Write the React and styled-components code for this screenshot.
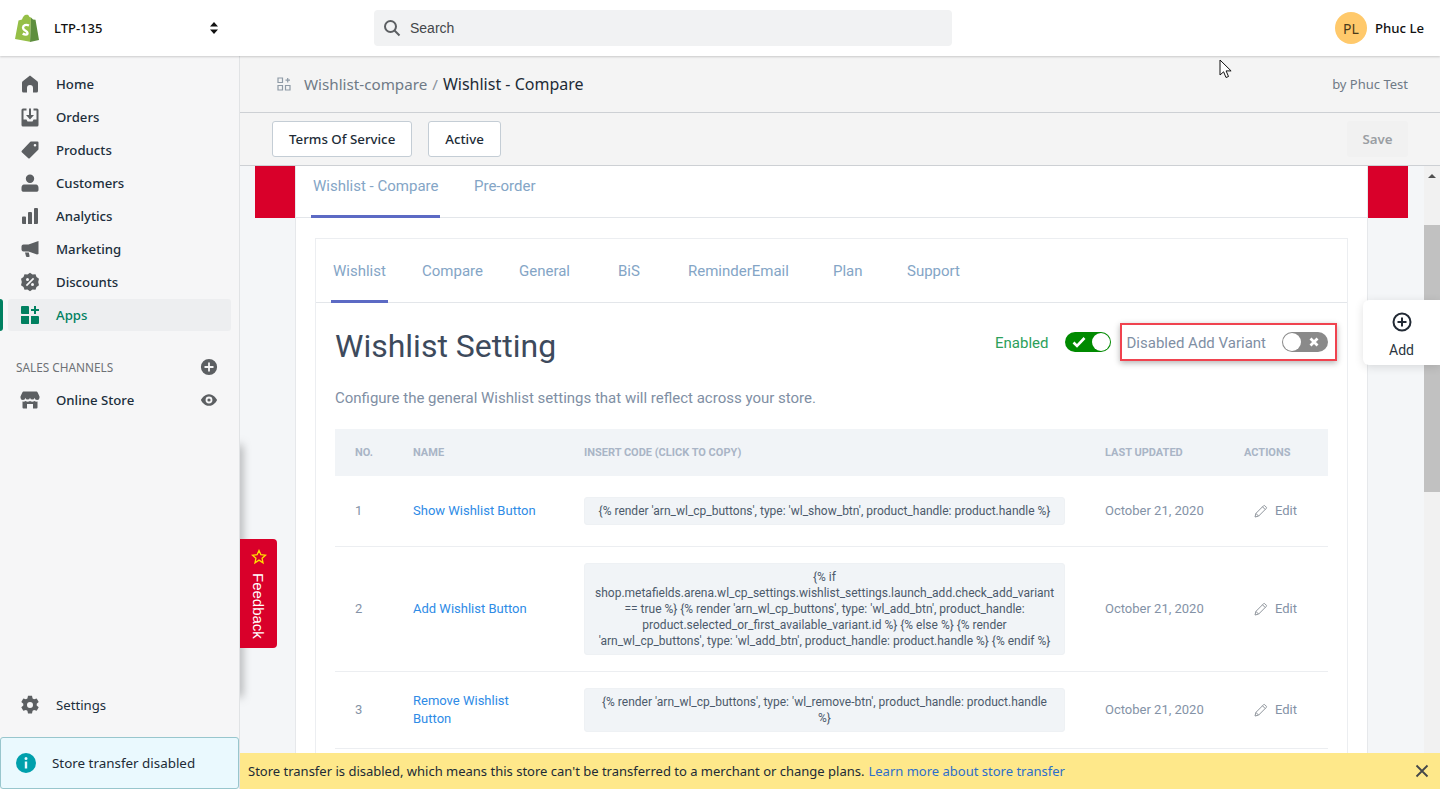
import React from 'react'
import styled, { createGlobalStyle } from 'styled-components'

const GlobalStyle = createGlobalStyle`
    html, body {
        margin: 0;
        height: 100%;
        overflow: hidden;
        background: #f4f6f8;
    }
    * {
        box-sizing: border-box;
    }
`;

const uiFont = `"Noto Sans", "Open Sans", sans-serif`;
const appFont = `Roboto, "Liberation Sans", sans-serif`;

const Page = styled.div`
    width: 1440px;
    height: 789px;
    display: flex;
    flex-direction: column;
    overflow: hidden;
    font-family: ${uiFont};
    color: #212b36;
`;

const TopBar = styled.header`
    position: relative;
    z-index: 3;
    height: 56px;
    flex: none;
    display: flex;
    align-items: center;
    background: #fff;
    box-shadow: 0 1px 2px rgba(0, 0, 0, 0.18);
`;

const StoreSwitch = styled.div`
    width: 374px;
    padding: 0 155px 0 14px;
    display: flex;
    align-items: center;
`;

const StoreName = styled.span`
    flex: 1;
    margin-left: 14px;
    font-size: 13px;
    font-weight: 500;
    color: #111;
`;

const SearchBox = styled.div`
    width: 578px;
    height: 36px;
    display: flex;
    align-items: center;
    gap: 9px;
    padding-left: 9px;
    background: #f1f2f3;
    border-radius: 4px;
    font-family: "Liberation Sans", sans-serif;
    font-size: 14px;
    color: #44474a;
`;

const UserBox = styled.div`
    margin-left: auto;
    padding-right: 16px;
    display: flex;
    align-items: center;
    gap: 8px;
    font-size: 13.2px;
    font-weight: 500;
    color: #111;
`;

const Avatar = styled.div`
    width: 32px;
    height: 32px;
    border-radius: 50%;
    display: flex;
    align-items: center;
    justify-content: center;
    background: #ffc96b;
    font-size: 14px;
    font-weight: 400;
    color: #4a3a1a;
`;

const Body = styled.div`
    flex: 1;
    min-height: 0;
    display: flex;
`;

const Sidebar = styled.nav`
    position: relative;
    z-index: 2;
    width: 240px;
    flex: none;
    display: flex;
    flex-direction: column;
    padding-top: 12px;
    background: #f6f6f7;
    border-right: 1px solid #e1e3e5;
`;

const NavRow = styled.div`
    position: relative;
    height: 32px;
    margin: 0 8px 1px 8px;
    padding-left: 12px;
    display: flex;
    align-items: center;
    gap: 16px;
    border-radius: 3px;
    font-size: 13.2px;
    font-weight: 500;
    color: ${({ $active }) => ($active ? '#008060' : '#202e3c')};
    background: ${({ $active }) => ($active ? '#edeef0' : 'transparent')};
    ${({ $active }) => $active && `
        &::before {
            content: '';
            position: absolute;
            left: -8px;
            top: 0;
            bottom: 0;
            width: 3px;
            background: #008060;
            border-radius: 0 3px 3px 0;
        }
    `}
`;

const SectionHead = styled.div`
    margin: 25px 0 7px;
    padding: 0 21px 0 16px;
    height: 20px;
    display: flex;
    align-items: center;
    justify-content: space-between;
    font-size: 11.8px;
    color: #6d7175;
`;

const RowEnd = styled.span`
    margin-left: auto;
    margin-right: 13px;
    display: flex;
`;

const SettingsRow = styled(NavRow)`
    margin-top: auto;
    margin-bottom: 16px;
    font-weight: 400;
`;

const TransferNote = styled.div`
    height: 52px;
    width: 239px;
    flex: none;
    display: flex;
    align-items: center;
    gap: 16px;
    padding-left: 15px;
    background: #eaf9fe;
    border: 1px solid #98c6cd;
    border-radius: 3px;
    font-size: 13.4px;
    color: #212b36;
`;

const Main = styled.main`
    position: relative;
    flex: 1;
    min-width: 0;
    display: flex;
    flex-direction: column;
`;

const PageHead = styled.div`
    height: 57px;
    flex: none;
    display: flex;
    align-items: center;
    padding: 0 32px 0 37px;
    background: #f4f4f4;
    border-bottom: 1px solid #cdd0d4;
`;

const Crumb = styled.span`
    margin-left: 13px;
    font-size: 15.2px;
    color: #6f7a86;
`;

const Slash = styled.span`
    margin: 0 5px;
    font-size: 15.2px;
    color: #8a929b;
`;

const CrumbNow = styled.span`
    font-size: 16px;
    color: #212b36;
`;

const ByLine = styled.span`
    margin-left: auto;
    font-size: 13px;
    color: #6f7a86;
`;

const Toolbar = styled.div`
    height: 53px;
    flex: none;
    display: flex;
    align-items: center;
    gap: 16px;
    padding: 0 32px;
    background: #f4f4f4;
    border-bottom: 1px solid #cdd0d4;
`;

const Button = styled.button`
    height: 36px;
    padding: 0 16px;
    background: #fff;
    border: 1px solid #c4cdd5;
    border-radius: 3px;
    font-family: ${uiFont};
    font-size: 13.3px;
    font-weight: 500;
    color: #212b36;
`;

const SaveButton = styled(Button)`
    margin-left: auto;
    width: 61px;
    padding: 0;
    background: #f1f1f1;
    border: none;
    font-weight: 600;
    color: #9a9ea3;
`;

const ScrollArea = styled.div`
    flex: 1;
    min-height: 0;
    display: flex;
    overflow: hidden;
`;

const Content = styled.div`
    flex: 1;
    min-width: 0;
    padding: 0 16px 0 15px;
    display: grid;
    grid-template-columns: 40px 1073px 40px;
    align-items: start;
    background: #f4f6f8;
    font-family: ${appFont};
`;

const RedBlock = styled.div`
    height: 52px;
    background: #d9002a;
`;

const Panel = styled.section`
    background: #fff;
    border-left: 1px solid #e6e8eb;
    border-right: 1px solid #e6e8eb;
    padding: 0 19px;
`;

const OuterTabs = styled.div`
    height: 52px;
    margin: 0 -19px;
    padding-left: 15px;
    display: flex;
    border-bottom: 1px solid #e3e6ea;
`;

const TabSlot = styled.div`
    width: ${({ $w }) => $w}px;
    display: flex;
`;

const TabLabel = styled.span`
    height: ${({ $h }) => $h}px;
    padding: ${({ $pt }) => $pt || 0}px 2px ${({ $pb }) => $pb || 0}px;
    display: flex;
    align-items: center;
    font-size: 15px;
    color: #84a5c6;
    border-bottom: 3px solid ${({ $active }) => ($active ? '#5c6ac4' : 'transparent')};
`;

const Card = styled.div`
    margin-top: 20px;
    height: 700px;
    border: 1px solid #eceef1;
    border-bottom: none;
`;

const InnerTabs = styled.div`
    height: 64px;
    padding-left: 15px;
    display: flex;
    border-bottom: 1px solid #e3e6ea;
`;

const CardBody = styled.div`
    padding: 20px 19px 0;
`;

const TitleRow = styled.div`
    display: flex;
    align-items: flex-start;
`;

const Title = styled.h1`
    margin: 0;
    font-size: 32px;
    line-height: 46px;
    font-weight: 400;
    color: #3d4a5c;
`;

const Controls = styled.div`
    margin-left: auto;
    margin-right: -9px;
    height: 38px;
    display: flex;
    align-items: center;
`;

const EnabledLabel = styled.span`
    padding-top: 1px;
    font-size: 15px;
    color: #2ca05a;
    margin-right: 16px;
`;

const Switch = styled.div`
    width: 46px;
    height: 20px;
    padding: 0 1px 0 7px;
    display: flex;
    align-items: center;
    justify-content: space-between;
    flex-direction: ${({ $on }) => ($on ? 'row' : 'row-reverse')};
    border-radius: 10px;
    background: ${({ $on }) => ($on ? '#008a00' : '#8a8a8a')};
    ${({ $on }) => !$on && 'padding: 0 9px 0 1px;'}
`;

const Knob = styled.span`
    width: 18px;
    height: 18px;
    border-radius: 50%;
    background: #fff;
`;

const Outlined = styled.div`
    margin-left: 9px;
    height: 38px;
    padding: 0 7px 0 5px;
    display: flex;
    align-items: center;
    gap: 16px;
    border: 2px solid #f0434f;
    box-shadow: 0 2px 6px rgba(0, 0, 0, 0.3);
    font-size: 15px;
    color: #7f8fa4;
`;

const OutlinedText = styled.span`
    padding-top: 1px;
`;

const Description = styled.p`
    margin: 19px 0 21px;
    font-size: 15px;
    line-height: 20px;
    color: #7f8fa4;
`;

const Table = styled.table`
    width: 993px;
    table-layout: fixed;
    border-collapse: separate;
    border-spacing: 0;
`;

const Th = styled.th`
    width: ${({ $w }) => $w}px;
    height: 47px;
    padding: 0 0 0 ${({ $pl }) => $pl || 0}px;
    background: #f1f4f7;
    text-align: left;
    font-size: 11px;
    font-weight: 700;
    text-transform: uppercase;
    color: #a9b5c6;
`;

const Td = styled.td`
    height: 71px;
    padding: 16px ${({ $pr }) => $pr || 0}px 16px ${({ $pl }) => $pl || 0}px;
    border-bottom: 1px solid #eceef1;
    font-size: 13px;
    line-height: 18px;
    color: #8492a6;
`;

const NameLink = styled.a`
    color: #2e8be6;
`;

const CodeBox = styled.div`
    padding: 5px 10px;
    background: #f1f4f7;
    border: 1px solid #eef1f4;
    border-radius: 3px;
    text-align: center;
    font-size: 12px;
    line-height: 16px;
    color: #4c5a6b;
`;

const EditCell = styled.span`
    display: flex;
    align-items: center;
    gap: 7px;
`;

const Scrollbar = styled.div`
    width: 16px;
    flex: none;
    display: flex;
    flex-direction: column;
    align-items: center;
    background: #f1f1f1;
`;

const ScrollUp = styled.span`
    margin-top: 8px;
    border-left: 4px solid transparent;
    border-right: 4px solid transparent;
    border-bottom: 4px solid #505050;
`;

const ScrollThumb = styled.span`
    margin-top: 47px;
    width: 100%;
    height: 267px;
    background: #c1c1c1;
`;

const Banner = styled.div`
    height: 36px;
    flex: none;
    position: relative;
    z-index: 2;
    display: flex;
    align-items: center;
    padding: 0 10px 0 8px;
    background: #fee88a;
    font-size: 13px;
    color: #212b36;
`;

const BannerLink = styled.a`
    margin-left: 4px;
    color: #2c6ecb;
`;

const BannerClose = styled.span`
    margin-left: auto;
    display: flex;
`;

const FeedbackShadow = styled.div`
    position: absolute;
    left: -2px;
    top: 390px;
    width: 2px;
    height: 250px;
    box-shadow: 0 0 10px 1px rgba(0, 0, 0, 0.55);
`;

const Feedback = styled.div`
    position: absolute;
    z-index: 2;
    left: 0;
    top: 483px;
    width: 37px;
    height: 109px;
    padding-top: 10px;
    display: flex;
    flex-direction: column;
    align-items: center;
    gap: 8px;
    background: #d9002a;
    border-radius: 0 4px 4px 0;
    font-family: "Liberation Sans", sans-serif;
    font-size: 15px;
    color: #fff;
`;

const FeedbackText = styled.span`
    writing-mode: vertical-rl;
`;

const AddFloat = styled.div`
    position: absolute;
    z-index: 2;
    right: 0;
    top: 244px;
    width: 77px;
    height: 65px;
    padding-top: 12px;
    display: flex;
    flex-direction: column;
    align-items: center;
    gap: 10px;
    background: #fff;
    border-radius: 6px 0 0 6px;
    box-shadow: 0 2px 10px rgba(0, 0, 0, 0.12);
    font-family: ${appFont};
    font-size: 14px;
    color: #2b3440;
`;

const Cursor = styled.svg`
    position: absolute;
    z-index: 4;
    left: 979px;
    top: 3px;
`;

const Icon = ({ color = '#5c5f62', size = 20, children }) => (
    <svg width={size} height={size} viewBox="0 0 20 20" fill={color}>{children}</svg>
)

const navItems = [
    ['Home', <path d="M10 1.500 3 7a2.400 2.400 0 0 0-1 2v8a1.500 1.500 0 0 0 1.500 1.500H7V14a3 3 0 0 1 6 0v4.500h3.500A1.500 1.500 0 0 0 18 17V9a2.400 2.400 0 0 0-1-2z" />],
    ['Orders', <path fillRule="evenodd" d="M3 1.500h3.500v2H3.500v9h3l1 2h5l1-2h3v-9h-3v-2H17A1.500 1.500 0 0 1 18.500 3v15a1.500 1.500 0 0 1-1.500 1.500H3A1.500 1.500 0 0 1 1.500 18V3A1.500 1.500 0 0 1 3 1.500zM9 1.500h2v6.500h3l-4 4.500L6 8h3z" />],
    ['Products', <path fillRule="evenodd" d="M11 1.500h6.500a1 1 0 0 1 1 1V9a1 1 0 0 1-.3.700l-8.500 8.500a1 1 0 0 1-1.400 0L1.800 12.200a1 1 0 0 1 0-1.400l8.500-9a1 1 0 0 1 .7-.3zM15 4a1.300 1.300 0 1 0 0 2.600A1.300 1.300 0 0 0 15 4z" />],
    ['Customers', <path d="M10 1.500a4.200 4.200 0 1 1 0 8.400 4.200 4.200 0 0 1 0-8.400zM4 11.500h12c1.500 0 2.500 1.500 2.500 3.200v2.300c0 1-1 1.800-2 1.800h-13c-1 0-2-.8-2-1.800v-2.300c0-1.700 1-3.200 2.500-3.200z" />],
    ['Analytics', <path d="M2 11.500a1 1 0 0 1 1-1h2a1 1 0 0 1 1 1v6.500H3a1 1 0 0 1-1-1zM8 7a1 1 0 0 1 1-1h2a1 1 0 0 1 1 1v11H8zM14 3a1 1 0 0 1 1-1h2a1 1 0 0 1 1 1v14a1 1 0 0 1-1 1h-3z" />],
    ['Marketing', <path d="M18.500 2v13l-1.500.500L8.500 12.500H3.500A2 2 0 0 1 1.500 10.500v-3a2 2 0 0 1 2-2h5L17 2.500zM5 13.500h3.800l.7 3.200a1 1 0 0 1-1 1.300H7a1 1 0 0 1-1-.8z" />],
    ['Discounts', <path fillRule="evenodd" d="M10 .8l2.500 1.700 3-.2 1 2.800 2.500 1.700-.8 3.200.8 3.200-2.500 1.700-1 2.800-3-.2L10 19.200l-2.500-1.700-3 .2-1-2.800L1 13.200l.8-3.200L1 6.800l2.500-1.700 1-2.800 3 .2zM7.500 6a1.500 1.500 0 1 0 0 3 1.500 1.500 0 0 0 0-3zm5 5a1.500 1.500 0 1 0 0 3 1.500 1.500 0 0 0 0-3zM13 5.800 5.800 13l1.200 1.200L14.200 7z" />],
]

const AppsIcon = () => (
    <Icon color="#008060">
        <path d="M1 2a1 1 0 0 1 1-1h6a1 1 0 0 1 1 1v7H2a1 1 0 0 1-1-1zM1 11h8v8H2a1 1 0 0 1-1-1zM11 11h7a1 1 0 0 1 1 1v6a1 1 0 0 1-1 1h-7zM14 1h2v3h3v2h-3v3h-2V6h-3V4h3z" />
    </Icon>
)

const PencilIcon = () => (
    <svg width="14" height="14" viewBox="0 0 14 14" fill="none" stroke="#8f959c" strokeWidth="1">
        <path d="M1 13l.9-3.600 7.600-7.600a1 1 0 0 1 1.400 0l1.300 1.300a1 1 0 0 1 0 1.400l-7.600 7.600zM1.900 9.400l2.700 2.700M8.500 2.800l2.700 2.700" />
    </svg>
)

const rows = [
    {
        no: 1,
        name: 'Show Wishlist Button',
        code: "{% render 'arn_wl_cp_buttons', type: 'wl_show_btn', product_handle: product.handle %}",
    },
    {
        no: 2,
        name: 'Add Wishlist Button',
        code: "{% if shop.metafields.arena.wl_cp_settings.wishlist_settings.launch_add.check_add_variant == true %} {% render 'arn_wl_cp_buttons', type: 'wl_add_btn', product_handle: product.selected_or_first_available_variant.id %} {% else %} {% render 'arn_wl_cp_buttons', type: 'wl_add_btn', product_handle: product.handle %} {% endif %}",
    },
    {
        no: 3,
        name: 'Remove Wishlist Button',
        code: "{% render 'arn_wl_cp_buttons', type: 'wl_remove-btn', product_handle: product.handle %}",
    },
]

const innerTabs = [
    ['Wishlist', 89, true],
    ['Compare', 97],
    ['General', 99],
    ['BiS', 70],
    ['ReminderEmail', 145],
    ['Plan', 74],
    ['Support', 80],
]

const App = () => {
    return (
        <Page>
            <GlobalStyle />
            <TopBar>
                <StoreSwitch>
                    <svg width="26" height="28" viewBox="0 0 26 28">
                        <path d="M17 3.500 15.500 3C14.800 1 13.500.5 12.500.8 11 .5 9 2 8 5.500L4.500 6.500 1 25l15 2.800z" fill="#95bf47" />
                        <path d="M17 3.500 19 5.500l2.500.2L25 26l-9 2z" fill="#5e8e3e" />
                        <path d="M15 11.500c-3-1.300-6-.3-6 2.200 0 3 4.500 3 4.500 5.300 0 2-2.500 2-4.800.6" fill="none" stroke="#fff" strokeWidth="2.400" />
                    </svg>
                    <StoreName>LTP-135</StoreName>
                    <svg width="10" height="14" viewBox="0 0 10 14" fill="#111">
                        <path d="M5 1l4 4.500H1zM5 13 1 8.500h8z" />
                    </svg>
                </StoreSwitch>
                <SearchBox>
                    <svg width="18" height="18" viewBox="0 0 18 18" fill="none" stroke="#5c5f62" strokeWidth="2">
                        <circle cx="7.500" cy="7.500" r="5.500" />
                        <path d="M11.500 11.500 16.500 16.500" />
                    </svg>
                    Search
                </SearchBox>
                <UserBox>
                    <Avatar>PL</Avatar>
                    Phuc Le
                </UserBox>
            </TopBar>
            <Body>
                <Sidebar>
                    {navItems.map(([label, icon]) => (
                        <NavRow key={label}>
                            <Icon>{icon}</Icon>
                            {label}
                        </NavRow>
                    ))}
                    <NavRow $active>
                        <AppsIcon />
                        Apps
                    </NavRow>
                    <SectionHead>
                        SALES CHANNELS
                        <Icon size={18}>
                            <path fillRule="evenodd" d="M10 1a9 9 0 1 1 0 18 9 9 0 0 1 0-18zM9 5v4H5v2h4v4h2v-4h4V9h-4V5z" />
                        </Icon>
                    </SectionHead>
                    <NavRow>
                        <Icon>
                            <path d="M4 1.500h12c.8 0 1.500.5 1.800 1.200L19.500 6.500v1.200a2.400 2.400 0 0 1-4.800 0 2.400 2.400 0 0 1-4.700 0 2.400 2.400 0 0 1-4.700 0 2.400 2.400 0 0 1-4.800 0V6.500l1.700-3.800C2.500 2 3.200 1.500 4 1.500z" />
                            <path d="M2.500 11.500c1 .3 2 .2 3-.4 1.400.8 3 .8 4.500 0 1.500.8 3.100.8 4.500 0 1 .6 2 .7 3 .4v6a1 1 0 0 1-1 1H13V14H7v4.500H3.500a1 1 0 0 1-1-1z" />
                        </Icon>
                        Online Store
                        <RowEnd>
                            <Icon size={18}>
                                <path fillRule="evenodd" d="M10 3.500c5 0 8 4.500 9 6.500-1 2-4 6.500-9 6.500S2 12 1 10c1-2 4-6.500 9-6.500zm0 2.700a3.800 3.800 0 1 0 0 7.600 3.800 3.800 0 0 0 0-7.600zm0 2a1.800 1.800 0 1 1 0 3.600 1.800 1.800 0 0 1 0-3.600z" />
                            </Icon>
                        </RowEnd>
                    </NavRow>
                    <SettingsRow>
                        <Icon>
                            <path fillRule="evenodd" d="M8 .8h4l.6 2.700 1.500.8 2.600-.9 2 3.500-2 1.800v1.800l2 1.800-2 3.500-2.600-.9-1.500.8-.6 2.700H8l-.6-2.700-1.500-.8-2.600.9-2-3.500 2-1.800V8.700l-2-1.800 2-3.500 2.600.9 1.500-.8zM10 7a3 3 0 1 0 0 6 3 3 0 0 0 0-6z" />
                        </Icon>
                        Settings
                    </SettingsRow>
                    <TransferNote>
                        <Icon color="#00a0ac">
                            <path fillRule="evenodd" d="M10 0a10 10 0 1 1 0 20 10 10 0 0 1 0-20zM8.800 8.500v7h2.400v-7zM10 4a1.500 1.500 0 1 0 0 3 1.500 1.500 0 0 0 0-3z" />
                        </Icon>
                        Store transfer disabled
                    </TransferNote>
                </Sidebar>
                <Main>
                    <PageHead>
                        <svg width="14" height="14" viewBox="0 0 14 14" fill="none" stroke="#8e9aa6" strokeWidth="1.200">
                            <path d="M1 1h4.500v4.500H1zM1 8.500h4.500V13H1zM8.500 8.500H13V13H8.500zM10.700 1v4.500M8.500 3.200H13" />
                        </svg>
                        <Crumb>Wishlist-compare</Crumb>
                        <Slash>/</Slash>
                        <CrumbNow>Wishlist - Compare</CrumbNow>
                        <ByLine>by Phuc Test</ByLine>
                    </PageHead>
                    <Toolbar>
                        <Button>Terms Of Service</Button>
                        <Button>Active</Button>
                        <SaveButton>Save</SaveButton>
                    </Toolbar>
                    <ScrollArea>
                        <Content>
                            <RedBlock />
                            <Panel>
                                <OuterTabs>
                                    <TabSlot $w={161}>
                                        <TabLabel $h={52} $pb={10} $active>Wishlist - Compare</TabLabel>
                                    </TabSlot>
                                    <TabSlot $w={80}>
                                        <TabLabel $h={52} $pb={10}>Pre-order</TabLabel>
                                    </TabSlot>
                                </OuterTabs>
                                <Card>
                                    <InnerTabs>
                                        {innerTabs.map(([label, width, active]) => (
                                            <TabSlot key={label} $w={width}>
                                                <TabLabel $h={64} $pt={2} $active={active}>{label}</TabLabel>
                                            </TabSlot>
                                        ))}
                                    </InnerTabs>
                                    <CardBody>
                                        <TitleRow>
                                            <Title>Wishlist Setting</Title>
                                            <Controls>
                                                <EnabledLabel>Enabled</EnabledLabel>
                                                <Switch $on>
                                                    <svg width="14" height="12" viewBox="0 0 14 12" fill="none" stroke="#fff" strokeWidth="2.600">
                                                        <path d="M1.500 6.500 5 10 12.500 2" />
                                                    </svg>
                                                    <Knob />
                                                </Switch>
                                                <Outlined>
                                                    <OutlinedText>Disabled Add Variant</OutlinedText>
                                                    <Switch>
                                                        <svg width="10" height="10" viewBox="0 0 10 10" fill="none" stroke="#fff" strokeWidth="2.800">
                                                            <path d="M1.500 1.500 8.500 8.500M8.500 1.500 1.500 8.500" />
                                                        </svg>
                                                        <Knob />
                                                    </Switch>
                                                </Outlined>
                                            </Controls>
                                        </TitleRow>
                                        <Description>Configure the general Wishlist settings that will reflect across your store.</Description>
                                        <Table>
                                            <thead>
                                                <tr>
                                                    <Th $w={78} $pl={20}>No.</Th>
                                                    <Th $w={171}>Name</Th>
                                                    <Th $w={521}>Insert code (click to copy)</Th>
                                                    <Th $w={139}>Last updated</Th>
                                                    <Th $w={84}>Actions</Th>
                                                </tr>
                                            </thead>
                                            <tbody>
                                                {rows.map(row => (
                                                    <tr key={row.no}>
                                                        <Td $pl={20}>{row.no}</Td>
                                                        <Td $pr={40}><NameLink>{row.name}</NameLink></Td>
                                                        <Td $pr={40}><CodeBox>{row.code}</CodeBox></Td>
                                                        <Td>October 21, 2020</Td>
                                                        <Td $pl={10}>
                                                            <EditCell><PencilIcon />Edit</EditCell>
                                                        </Td>
                                                    </tr>
                                                ))}
                                            </tbody>
                                        </Table>
                                    </CardBody>
                                </Card>
                            </Panel>
                            <RedBlock />
                        </Content>
                        <Scrollbar>
                            <ScrollUp />
                            <ScrollThumb />
                        </Scrollbar>
                    </ScrollArea>
                    <Banner>
                        Store transfer is disabled, which means this store can't be transferred to a merchant or change plans.
                        <BannerLink>Learn more about store transfer</BannerLink>
                        <BannerClose>
                            <svg width="16" height="16" viewBox="0 0 16 16" fill="none" stroke="#44474a" strokeWidth="1.800">
                                <path d="M2.500 2.500 13.500 13.500M13.500 2.500 2.500 13.500" />
                            </svg>
                        </BannerClose>
                    </Banner>
                    <FeedbackShadow />
                    <Feedback>
                        <svg width="16" height="16" viewBox="0 0 16 16" fill="none" stroke="#ffe100" strokeWidth="1.300">
                            <path d="M8 1.500l1.900 4.200 4.600.5-3.400 3.100.9 4.500L8 11.100l-4 2.700.9-4.500L1.500 6.200l4.600-.5z" />
                        </svg>
                        <FeedbackText>Feedback</FeedbackText>
                    </Feedback>
                    <AddFloat>
                        <svg width="20" height="20" viewBox="0 0 20 20" fill="none" stroke="#222a35" strokeWidth="2">
                            <circle cx="10" cy="10" r="8.500" />
                            <path d="M10 5.500v9M5.500 10h9" />
                        </svg>
                        Add
                    </AddFloat>
                    <Cursor width="14" height="20" viewBox="0 0 14 20" fill="#fff" stroke="#111" strokeWidth="1">
                        <path d="M1 1v15l3.600-3.200 2.400 5.700 2.500-1-2.400-5.600h5z" />
                    </Cursor>
                </Main>
            </Body>
        </Page>
    );
}

export default App;
